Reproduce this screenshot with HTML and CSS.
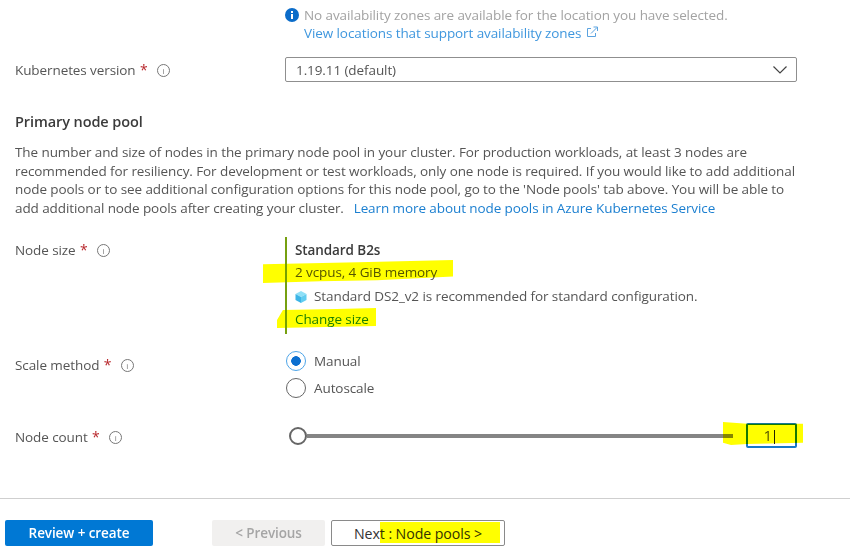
FILE: index.html
```html
<!DOCTYPE html>
<html lang="en">
<head>
    <meta charset="UTF-8">
    <title>Create Kubernetes cluster</title>
    <link rel="stylesheet" href="styles.css">
</head>
<body>
    <main class="form">
        <div class="zone-note">
            <div class="zone-line">
                <svg class="zone-icon" viewBox="0 0 14 14"><circle cx="7" cy="7" r="7" fill="#0b6cc9"/><rect x="6" y="6" width="2" height="5" fill="#fff"/><rect x="6" y="3" width="2" height="2" fill="#fff"/></svg>
                <span>No availability zones are available for the location you have selected.</span>
            </div>
            <a class="link zone-link">View locations that support availability zones
                <svg class="ext-icon" viewBox="0 0 12 12" fill="none" stroke="#5ba3e0"><path d="M5 2.5H1.5v8h8V7"/><path d="M5 7.5 11 1.5M7.5 1H11.5V5"/></svg>
            </a>
        </div>

        <div class="row version-row">
            <label class="label">Kubernetes version <em>*</em> <i class="info">i</i></label>
            <div class="select">
                <span>1.19.11 (default)</span>
                <svg class="chevron" viewBox="0 0 14 8" fill="none" stroke="#444" stroke-width="1.2"><path d="M.5.5 7 7 13.5.5"/></svg>
            </div>
        </div>

        <h2 class="heading">Primary node pool</h2>
        <p class="intro">The number and size of nodes in the primary node pool in your cluster. For production workloads, at least 3 nodes are recommended for resiliency. For development or test workloads, only one node is required. If you would like to add additional node pools or to see additional configuration options for this node pool, go to the 'Node pools' tab above. You will be able to add additional node pools after creating your cluster.&nbsp; <a class="link learn-link">Learn more about node pools in Azure Kubernetes Service</a></p>

        <div class="row size-row">
            <label class="label">Node size <em>*</em> <i class="info">i</i></label>
            <div class="size-box">
                <b class="size-name">Standard B2s</b>
                <div class="marked"><span class="marker marker-specs"></span>2 vcpus, 4 GiB memory</div>
                <div class="recommend">
                    <svg class="cube" viewBox="0 0 12 12"><path d="M6 0 11.5 3 6 6 .5 3z" fill="#8fe0f7"/><path d="M.5 3 6 6v6L.5 9z" fill="#3cb4e6"/><path d="M11.5 3 6 6v6l5.5-3z" fill="#62cdf0"/></svg>
                    <span>Standard DS2_v2 is recommended for standard configuration.</span>
                </div>
                <div class="marked"><span class="marker marker-change"></span><a class="change-link">Change size</a></div>
            </div>
        </div>

        <div class="row scale-row">
            <label class="label">Scale method <em>*</em> <i class="info">i</i></label>
            <div class="radios">
                <div class="radio-item"><span class="radio radio-on"></span>Manual</div>
                <div class="radio-item"><span class="radio"></span>Autoscale</div>
            </div>
        </div>

        <div class="row count-row">
            <label class="label">Node count <em>*</em> <i class="info">i</i></label>
            <div class="slider-wrap">
                <span class="marker marker-count"></span>
                <span class="thumb"></span>
                <span class="track"></span>
                <div class="count-input">1<span class="caret"></span></div>
            </div>
        </div>
    </main>

    <footer class="footer">
        <button class="btn btn-primary">Review + create</button>
        <button class="btn btn-disabled">&lt; Previous</button>
        <button class="btn btn-next"><span class="marker marker-next"></span>Next : Node pools &gt;</button>
    </footer>
</body>
</html>
```

FILE: styles.css
```css
html, body {
    margin: 0;
    padding: 0;
}

body {
    width: 850px;
    height: 556px;
    overflow: hidden;
    background-color: #ffffff;
    color: #555555;
    font-family: 'Open Sans', 'Liberation Sans', sans-serif;
    font-size: 13.5px;
    letter-spacing: -0.09px;
}

.form {
    padding: 6px 0 0 15px;
    width: 782px;
}

.link {
    color: #1b7fd0;
}

.learn-link {
    margin-left: 3px;
}

.zone-note {
    margin-left: 270px;
    line-height: 18px;
}

.zone-line {
    display: flex;
    align-items: center;
    gap: 5px;
    color: #a3a3a3;
}

.zone-icon {
    width: 14px;
    height: 14px;
}

.zone-link {
    display: block;
    margin-left: 19px;
    color: #3f97de;
}

.ext-icon {
    width: 12px;
    height: 12px;
    margin-left: 1px;
}

.row {
    display: grid;
    grid-template-columns: 270px 512px;
}

.label em {
    color: #b8282c;
    font-style: normal;
    font-size: 14px;
    margin-left: 1px;
}

.info {
    display: inline-block;
    width: 11px;
    height: 11px;
    line-height: 11px;
    margin-left: 6px;
    border: 1px solid #777;
    border-radius: 50%;
    text-align: center;
    font-style: normal;
    font-size: 8px;
    color: #777;
    vertical-align: 1px;
}

.version-row {
    margin-top: 15px;
    align-items: center;
}

.select {
    display: flex;
    justify-content: space-between;
    align-items: center;
    box-sizing: border-box;
    height: 25px;
    padding: 0 9px 0 10px;
    border: 1px solid #8f8f8f;
    border-radius: 2px;
}

.chevron {
    width: 14px;
    height: 8px;
}

.heading {
    margin: 30px 0 0;
    font-size: 14.5px;
    font-weight: 600;
    line-height: 19px;
    color: #3b3b3b;
}

.intro {
    margin: 12px 0 0;
    line-height: 18.5px;
}

.size-row {
    margin-top: 20px;
}

.size-row .label {
    padding-top: 3px;
}

.size-box {
    height: 97px;
    padding: 2px 0 0 8px;
    border-left: 2px solid #76a010;
    box-sizing: border-box;
    line-height: 23px;
}

.size-name {
    display: block;
    font-weight: 600;
    line-height: 22px;
    color: #3b3b3b;
}

.marked {
    position: relative;
}

.marker {
    position: absolute;
    background-color: #ffff00;
    mix-blend-mode: multiply;
}

.marker-specs {
    left: -32px;
    top: -1px;
    width: 190px;
    height: 23px;
    clip-path: polygon(0 18%, 50% 10%, 100% 0, 100% 72%, 60% 88%, 30% 92%, 0 100%);
}

.marker-change {
    left: -18px;
    top: 0;
    width: 99px;
    height: 20px;
    clip-path: polygon(6% 10%, 60% 5%, 100% 0, 100% 90%, 50% 95%, 0 100%, 0 60%);
}

.recommend {
    display: flex;
    align-items: center;
    gap: 7px;
    margin-top: 1px;
}

.cube {
    width: 12px;
    height: 12px;
}

.change-link {
    color: #1b7fd0;
}

.scale-row {
    margin-top: 16px;
}

.scale-row .label {
    padding-top: 5px;
}

.radios {
    display: flex;
    flex-direction: column;
    gap: 5px;
}

.radio-item {
    display: flex;
    align-items: center;
    gap: 8px;
    height: 22px;
}

.radio {
    box-sizing: border-box;
    width: 20px;
    height: 20px;
    margin-left: 1px;
    border: 1.5px solid #666;
    border-radius: 50%;
}

.radio-on {
    border-color: #4ea5e8;
    background: radial-gradient(circle, #0b6fd0 0, #0b6fd0 4.5px, #ffffff 5.1px);
}

.count-row {
    margin-top: 24px;
    align-items: center;
}

.count-row .label {
    padding-top: 2px;
}

.slider-wrap {
    position: relative;
    display: flex;
    align-items: center;
    height: 25px;
}

.thumb {
    box-sizing: border-box;
    width: 18px;
    height: 18px;
    margin-left: 4px;
    border: 2px solid #666;
    border-radius: 50%;
    background-color: #fff;
}

.track {
    width: 426px;
    height: 4px;
    background-color: #858585;
}

.marker-count {
    left: 438px;
    top: -1px;
    width: 80px;
    height: 23px;
    z-index: 1;
    clip-path: polygon(0 0, 30% 8%, 100% 8%, 100% 90%, 30% 96%, 10% 100%, 0 90%);
}

.count-input {
    position: relative;
    box-sizing: border-box;
    width: 51px;
    height: 25px;
    margin-left: 13px;
    padding-right: 23px;
    border: 2px solid #1678c8;
    border-radius: 2px;
    font-size: 15px;
    line-height: 21px;
    text-align: right;
}

.caret {
    position: absolute;
    top: 5px;
    right: 20px;
    width: 1px;
    height: 14px;
    background-color: #222;
}

.footer {
    display: flex;
    align-items: center;
    margin-top: 50px;
    padding: 21px 0 0 5px;
    border-top: 1px solid #cfcfcf;
}

.btn {
    box-sizing: border-box;
    height: 26px;
    padding: 0;
    border: 1px solid transparent;
    border-radius: 2px;
    font-family: inherit;
    font-size: 13.5px;
    font-weight: 600;
    letter-spacing: inherit;
}

.btn-primary {
    width: 148px;
    background-color: #0078d4;
    color: #ffffff;
}

.btn-disabled {
    width: 113px;
    margin-left: 59px;
    background-color: #f1f0ef;
    color: #a5a5a5;
}

.btn-next {
    position: relative;
    width: 174px;
    margin-left: 6px;
    background-color: #ffffff;
    border-color: #8a8a8a;
    color: #333;
    font-size: 14.2px;
    font-weight: 400;
}

.marker-next {
    left: 48px;
    top: 1px;
    width: 120px;
    height: 21px;
}
```
